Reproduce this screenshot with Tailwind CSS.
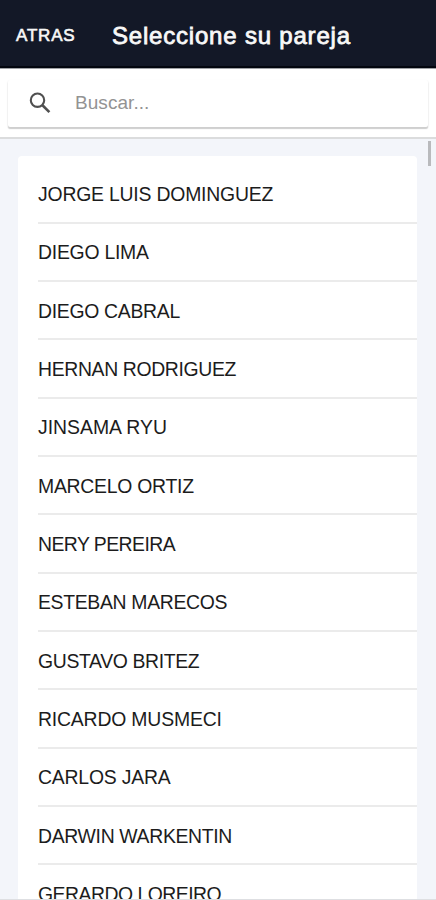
<!DOCTYPE html>
<html lang="es">
<head>
<meta charset="utf-8">
<title>Seleccione su pareja</title>
<script src="https://cdn.jsdelivr.net/npm/@tailwindcss/browser@4"></script>
</head>
<body class="h-[900px] overflow-hidden bg-[#f3f5fa] font-['Liberation_Sans',Arial,sans-serif]">
<div class="flex h-[900px] flex-col overflow-hidden border-b border-[#dedfe2]">
  <header class="flex h-[68px] shrink-0 items-center border-b-2 border-[#03060f] bg-[#131827] pt-[5px] pl-[16px] text-[#f8f8f8]">
    <button class="w-[96px] text-left text-[17px] tracking-[0.8px] [-webkit-text-stroke:0.6px_#f8f8f8]">ATRAS</button>
    <h1 class="text-[24px] whitespace-nowrap tracking-[0.8px] [-webkit-text-stroke:0.8px_#f8f8f8]">Seleccione su pareja</h1>
  </header>
  <div class="h-[71px] shrink-0 border-t border-b-2 border-t-[#a0a2a6] border-b-[#dbdcdd] bg-white px-[8px] pt-[11px]">
    <label class="flex h-[47px] items-center rounded-[2px] bg-white pb-[2px] pl-[20px] shadow-[0_2px_1px_0_#cfcfcf,0_1px_2px_0_#dddddd]">
      <svg class="h-[24px] w-[24px]" viewBox="0 0 24 24" fill="none" stroke="#505050" stroke-width="2.1"><circle cx="9.5" cy="9.2" r="6.7"/><path d="M14.2 14 21.4 21.2" stroke-width="2.6"/></svg>
      <span class="ml-[23px] pt-[2px] text-[19px] tracking-[0.05px] text-[#939393]">Buscar...</span>
    </label>
  </div>
  <main class="relative min-h-0 flex-1 overflow-hidden pt-[17px] pr-[19px] pl-[18px]">
    <div class="absolute top-[2px] right-[5px] h-[25px] w-[3px] bg-[#b9babd]"></div>
    <ul class="h-[800px] rounded-t-[4px] bg-white pt-[9.3px] pl-[20px] text-[19.4px] text-[#1c1c1c] *:flex *:h-[58.33px] *:items-center *:border-b-2 *:border-[#ebebeb] *:pt-[2px] *:whitespace-nowrap">
      <li class="tracking-[-0.2px]">JORGE LUIS DOMINGUEZ</li>
      <li class="tracking-[-0.25px]">DIEGO LIMA</li>
      <li class="tracking-[-0.3px]">DIEGO CABRAL</li>
      <li class="tracking-[-0.35px]">HERNAN RODRIGUEZ</li>
      <li>JINSAMA RYU</li>
      <li class="tracking-[-0.25px]">MARCELO ORTIZ</li>
      <li class="tracking-[-0.55px]">NERY PEREIRA</li>
      <li class="tracking-[-0.32px]">ESTEBAN MARECOS</li>
      <li class="tracking-[-0.35px]">GUSTAVO BRITEZ</li>
      <li class="tracking-[-0.18px]">RICARDO MUSMECI</li>
      <li class="tracking-[-0.2px]">CARLOS JARA</li>
      <li class="tracking-[-0.33px]">DARWIN WARKENTIN</li>
      <li class="tracking-[-0.5px]">GERARDO LOREIRO</li>
    </ul>
  </main>
</div>
</body>
</html>
